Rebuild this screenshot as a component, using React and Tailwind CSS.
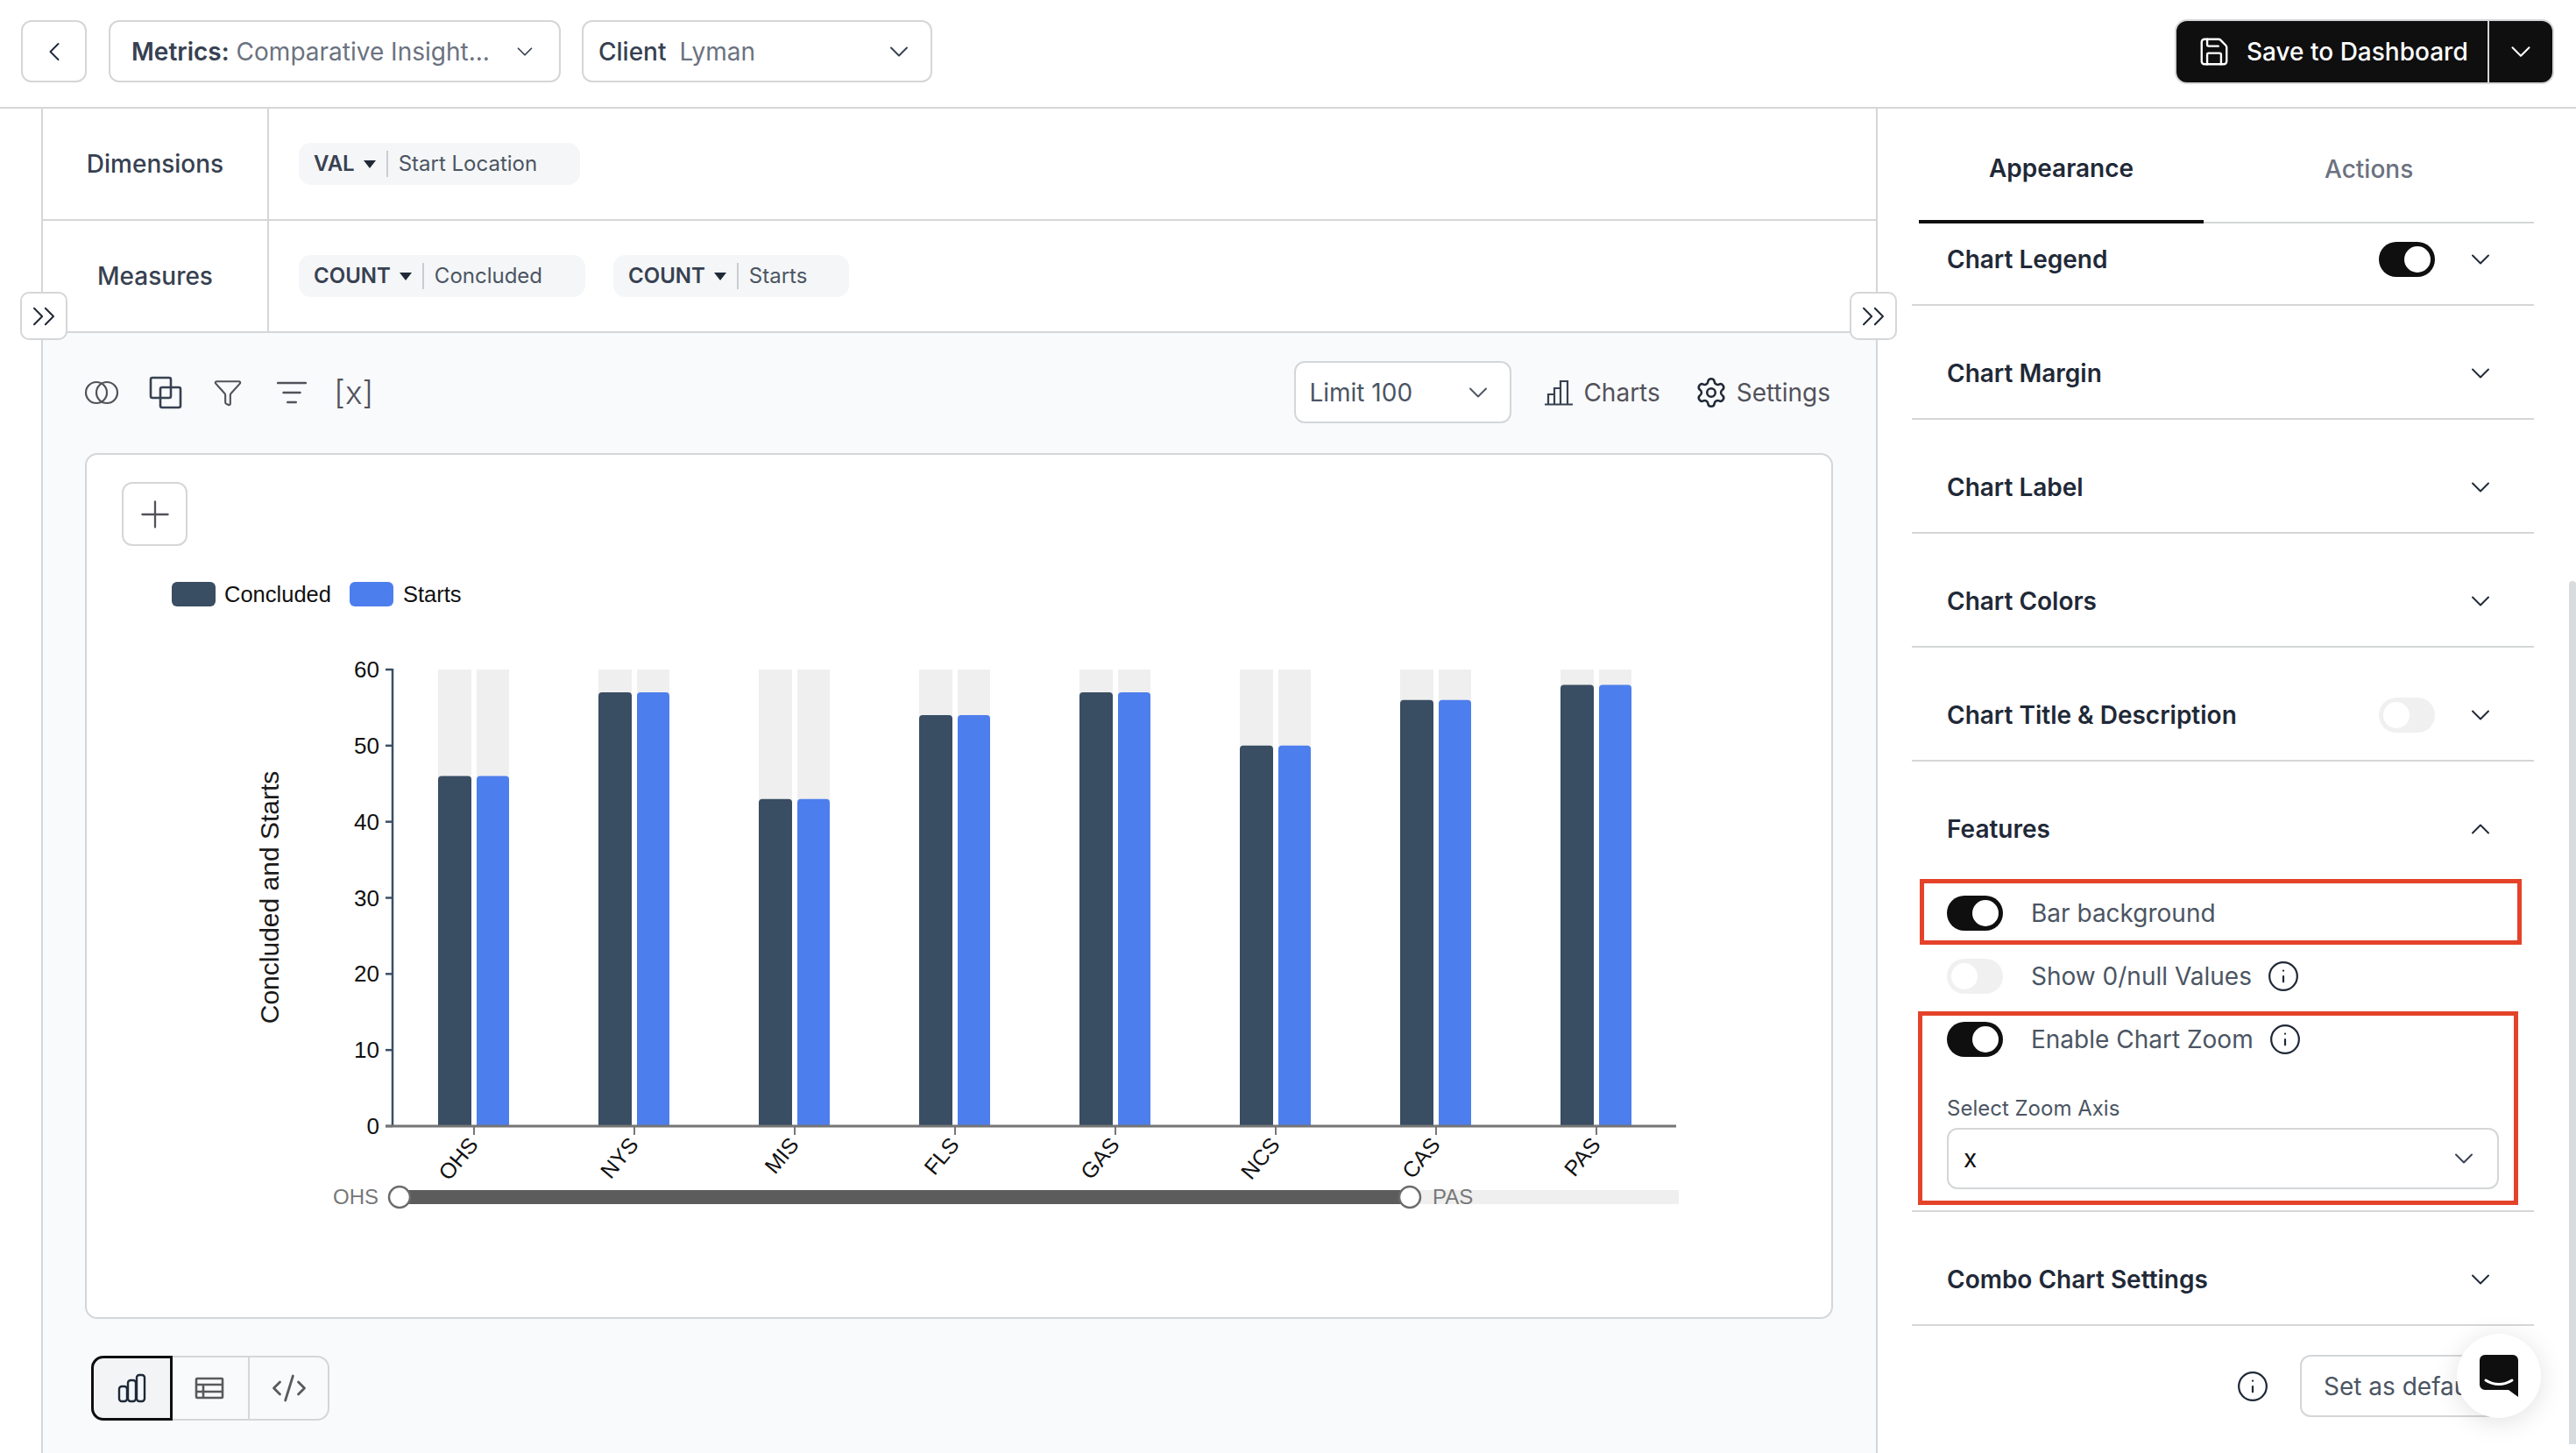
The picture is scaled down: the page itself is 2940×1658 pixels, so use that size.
import { ChevronDown, ChevronUp, ChevronLeft, ChevronsRight, Save, Filter, ListFilter, Settings, Info, Plus, CodeXml } from 'lucide-react'

const BARS = [
  { name: 'OHS', value: 46 },
  { name: 'NYS', value: 57 },
  { name: 'MIS', value: 43 },
  { name: 'FLS', value: 54 },
  { name: 'GAS', value: 57 },
  { name: 'NCS', value: 50 },
  { name: 'CAS', value: 56 },
  { name: 'PAS', value: 58 },
]

const Y0 = 1285
const UNIT = 8.683

// rectangle with rounded top only
const barPath = (x, w, h) => `M${x} ${Y0}V${Y0 - h + 4}Q${x} ${Y0 - h} ${x + 4} ${Y0 - h}H${x + w - 4}Q${x + w} ${Y0 - h} ${x + w} ${Y0 - h + 4}V${Y0}Z`

function Toggle({ on }) {
  return (
    <div className={`flex h-[40px] w-[64px] shrink-0 rounded-full p-[5px] ${on ? 'justify-end bg-[#0f0f10]' : 'justify-start bg-[#f0f0f1]'}`}>
      <div className="h-[30px] w-[30px] rounded-full bg-white" />
    </div>
  )
}

function Chip({ agg, label, className }) {
  return (
    <div className={`flex h-[48px] items-center rounded-[14px] bg-[#f5f6f7] pl-[17px] text-[24px] ${className}`}>
      <span className="font-semibold text-[#374151]">{agg}</span>
      <span className="ml-[10px] h-0 w-0 border-x-[7px] border-t-[9px] border-x-transparent border-t-[#1f2937]" />
      <span className="ml-[12px] h-[30px] w-[2px] bg-[#c9ccd1]" />
      <span className="ml-[12px] text-[#4b5563]">{label}</span>
    </div>
  )
}

function Row({ label, toggle, up, first }) {
  const Icon = up ? ChevronUp : ChevronDown
  return (
    <div className={`flex items-center pl-[40px] pr-[43px] ${first ? 'h-[94px] border-b-2 border-[#d4d6d8] pb-[10px]' : up ? 'h-[126px] pt-[28px]' : 'h-[130px] border-b-2 border-[#d4d6d8] pt-[26px]'}`}>
      <span className="text-[28px] font-semibold text-[#1f2937]">{label}</span>
      <div className="ml-auto flex items-center gap-[34px]">
        {toggle !== undefined && <Toggle on={toggle} />}
        <Icon size={36} strokeWidth={1.3} className="text-[#1f2937]" />
      </div>
    </div>
  )
}

function Feature({ label, on, info }) {
  return (
    <div className="flex h-[72px] items-center pl-[40px]">
      <Toggle on={on} />
      <span className="ml-[32px] text-[28px] text-[#4b5563]">{label}</span>
      {info && <Info size={38} strokeWidth={1.4} className="ml-[17px] text-[#1f2937]" />}
    </div>
  )
}

function Chart() {
  return (
    <svg viewBox="99 700 1991 720" className="mt-[8px] block h-[720px] w-[1991px]" fontFamily="'Liberation Sans', sans-serif">
      {[0, 10, 20, 30, 40, 50, 60].map((v) => (
        <g key={v}>
          <line x1="440" x2="448" y1={Y0 - v * UNIT} y2={Y0 - v * UNIT} stroke="#3b4f66" strokeWidth="2.5" />
          <text x="433" y={Y0 - v * UNIT + 9} textAnchor="end" fontSize="26" fill="#111">{v}</text>
        </g>
      ))}
      <line x1="448" x2="448" y1="763" y2={Y0} stroke="#3b4f66" strokeWidth="2.5" />
      <text transform="translate(318 1024) rotate(-90)" textAnchor="middle" fontSize="30" fill="#1a1a1a">Concluded and Starts</text>
      {BARS.map((b, i) => {
        const t = 541 + i * 183
        const h = b.value * UNIT
        return (
          <g key={b.name}>
            <rect x={t - 41} y="764" width="38" height={Y0 - 764} fill="#efefef" />
            <rect x={t + 3} y="764" width="37" height={Y0 - 764} fill="#efefef" />
            <path d={barPath(t - 41, 38, h)} fill="#394d63" />
            <path d={barPath(t + 3, 37, h)} fill="#4d7eed" />
            <line x1={t} x2={t} y1={Y0} y2={Y0 + 10} stroke="#777" strokeWidth="2" />
            <text transform={`translate(${t + 6} ${Y0 + 22}) rotate(-50)`} textAnchor="end" fontSize="25" fill="#111">{b.name}</text>
          </g>
        )
      })}
      <line x1="440" x2="1913" y1={Y0} y2={Y0} stroke="#757575" strokeWidth="3" />
      <rect x="456" y="1358" width="1460" height="16" fill="#efefef" />
      <rect x="456" y="1358" width="1153" height="16" fill="#5c5c5c" />
      <circle cx="456" cy="1366" r="12" fill="#fff" stroke="#6b6b6b" strokeWidth="2.5" />
      <circle cx="1609" cy="1366" r="12" fill="#fff" stroke="#6b6b6b" strokeWidth="2.5" />
      <text x="432" y="1374" textAnchor="end" fontSize="24" fill="#777">OHS</text>
      <text x="1635" y="1374" fontSize="24" fill="#777">PAS</text>
    </svg>
  )
}

export default function App() {
  return (
    <div className="relative h-[1658px] w-[2940px] overflow-hidden bg-white font-[family-name:Inter,sans-serif]">
      {/* top bar */}
      <header className="flex h-[124px] items-start border-b-2 border-[#d4d6d8] pl-[24px] pr-[25px] pt-[23px]">
        <button className="flex h-[71px] w-[75px] items-center justify-center rounded-[12px] border-2 border-[#d4d6d8]">
          <ChevronLeft size={36} strokeWidth={1.3} className="text-[#1f2937]" />
        </button>
        <div className="ml-[25px] flex h-[71px] w-[516px] items-center rounded-[12px] border-2 border-[#d4d6d8] pl-[24px] text-[28px]">
          <span className="font-semibold text-[#374151]">Metrics:</span>
          <span className="ml-[8px] text-[#6b7280]">Comparative Insight...</span>
          <ChevronDown size={30} strokeWidth={1.4} className="ml-auto mr-[24px] text-[#374151]" />
        </div>
        <div className="ml-[24px] flex h-[71px] w-[400px] items-center rounded-[12px] border-2 border-[#d4d6d8] pl-[17px] text-[28px]">
          <span className="font-medium text-[#374151]">Client</span>
          <span className="ml-[15px] text-[#6b7280]">Lyman</span>
          <ChevronDown size={36} strokeWidth={1.3} className="ml-auto mr-[18px] text-[#374151]" />
        </div>
        <div className="ml-auto -mt-px flex h-[74px] w-[433px] items-center rounded-[14px] border-2 border-[#d4d6d8] bg-[#0f0f10] text-white">
          <Save size={38} strokeWidth={1.5} className="ml-[24px]" />
          <span className="ml-[18px] text-[28px] font-medium">Save to Dashboard</span>
          <span className="ml-auto h-full w-[2px] bg-[#d4d6d8]" />
          <ChevronDown size={38} strokeWidth={1.3} className="mx-[17px]" />
        </div>
      </header>

      <div className="flex h-[1534px]">
        {/* main column */}
        <main className="ml-[47px] w-[2096px] border-x-2 border-[#d4d6d8] bg-[#f9fafb]">
          <div className="flex h-[128px] border-b-2 border-[#d4d6d8] bg-white">
            <div className="flex w-[258px] items-center justify-center border-r-2 border-[#d4d6d8] text-[28px] font-medium text-[#374151]">Dimensions</div>
            <div className="flex items-center pl-[34px]">
              <Chip agg="VAL" label="Start Location" className="w-[321px]" />
            </div>
          </div>
          <div className="flex h-[128px] border-b-2 border-[#d4d6d8] bg-white">
            <div className="flex w-[258px] items-center justify-center border-r-2 border-[#d4d6d8] text-[28px] font-medium text-[#374151]">Measures</div>
            <div className="flex items-center gap-[32px] pl-[34px]">
              <Chip agg="COUNT" label="Concluded" className="w-[327px]" />
              <Chip agg="COUNT" label="Starts" className="w-[269px]" />
            </div>
          </div>

          {/* toolbar */}
          <div className="flex h-[137px] items-center pb-[2px] pl-[47px] text-[#52525b]">
            <svg width="40" height="28" viewBox="0 0 40 28" fill="none" stroke="#52525b" strokeWidth="2.2">
              <circle cx="14" cy="14" r="12" />
              <circle cx="26" cy="14" r="12" />
            </svg>
            <svg width="38" height="38" viewBox="0 0 38 38" fill="none" stroke="#374151" strokeWidth="2.6" className="ml-[34px]">
              <rect x="2" y="2" width="23" height="23" rx="2" />
              <rect x="13" y="13" width="23" height="23" rx="2" />
            </svg>
            <Filter size={34} strokeWidth={1.5} className="ml-[35px]" />
            <ListFilter size={38} strokeWidth={1.6} className="ml-[37px]" />
            <span className="ml-[29px] text-[37px] font-light leading-none">[x]</span>
            <div className="ml-auto flex h-[71px] w-[248px] items-center rounded-[12px] border-2 border-[#d4d6d8] bg-white pl-[15px] text-[28px] text-[#4b5563]">
              Limit 100
              <ChevronDown size={36} strokeWidth={1.3} className="ml-auto mr-[18px]" />
            </div>
            <svg width="32" height="30" viewBox="0 0 32 30" fill="none" stroke="#374151" strokeWidth="2.2" className="ml-[38px]">
              <path d="M0 28.5h32M4 28V17h7v11M11 28V10h7v18M18 28V2h8v26" />
            </svg>
            <span className="ml-[12px] text-[28px]">Charts</span>
            <Settings size={38} strokeWidth={1.6} className="ml-[39px] text-[#1f2937]" />
            <span className="ml-[10px] mr-[52px] text-[28px]">Settings</span>
          </div>

          {/* chart card */}
          <div className="ml-[48px] h-[988px] w-[1995px] rounded-[14px] border-2 border-[#d4d6d8] bg-white">
            <div className="pl-[40px] pt-[31px]">
              <button className="flex h-[73px] w-[75px] items-center justify-center rounded-[12px] border-2 border-[#d4d6d8]">
                <Plus size={50} strokeWidth={1.1} className="text-[#52525b]" />
              </button>
            </div>
            <div className="ml-[97px] mt-[41px] flex h-[28px] items-center text-[25.5px] text-[#111] font-[family-name:'Liberation_Sans',sans-serif]">
              <span className="h-[28px] w-[50px] rounded-[6px] bg-[#394d63]" />
              <span className="ml-[10px]">Concluded</span>
              <span className="ml-[21px] h-[28px] w-[50px] rounded-[6px] bg-[#4d7eed]" />
              <span className="ml-[11px]">Starts</span>
            </div>
            <Chart />
          </div>

          {/* view switch */}
          <div className="ml-[55px] mt-[42px] flex h-[74px] w-[272px] rounded-[14px] border-2 border-[#d4d6d8]">
            <div className="-m-[2px] flex h-[74px] w-[93px] items-center justify-center rounded-l-[14px] border-[3px] border-[#0f0f10] bg-[#f3f4f6]">
              <svg width="34" height="34" viewBox="0 0 34 34" fill="#f3f6fa" stroke="#1f2937" strokeWidth="2.4">
                <rect x="2" y="15" width="9" height="17" rx="3" />
                <rect x="12" y="8" width="9" height="24" rx="3" />
                <rect x="22" y="2" width="9" height="30" rx="3" />
              </svg>
            </div>
            <div className="flex w-[90px] items-center justify-center border-r-2 border-[#d4d6d8]">
              <svg width="34" height="26" viewBox="0 0 34 26" fill="none" stroke="#5a5a5a" strokeWidth="2.6">
                <rect x="2" y="2" width="30" height="22" rx="1" />
                <path d="M2 9h30M2 17h30M10 9v15" />
              </svg>
            </div>
            <div className="flex flex-1 items-center justify-center">
              <CodeXml size={42} strokeWidth={1.6} className="text-[#5a5a5a]" />
            </div>
          </div>
        </main>

        {/* right panel */}
        <aside className="flex-1">
          <div className="ml-[47px] flex h-[131px] w-[702px] border-b-2 border-[#d4d6d8] text-[28px] font-medium">
            <div className="-mb-[2px] flex h-[131px] w-[325px] items-center justify-center border-b-4 border-[#0f0f10] pt-[8px] font-semibold text-[#1f2937]">Appearance</div>
            <div className="flex h-[129px] flex-1 items-center pt-[8px] pl-[138px] text-[#6b7280]">Actions</div>
          </div>
          <div className="ml-[39px] w-[710px]">
            <Row label="Chart Legend" toggle={true} first />
            <Row label="Chart Margin" />
            <Row label="Chart Label" />
            <Row label="Chart Colors" />
            <Row label="Chart Title & Description" toggle={false} />
            <div className="border-b-2 border-[#d4d6d8]">
              <Row label="Features" up />
              <div className="mt-[11px]">
                <Feature label="Bar background" on />
                <Feature label="Show 0/null Values" info />
                <Feature label="Enable Chart Zoom" on info />
              </div>
              <div className="mt-[28px] pl-[40px] text-[24px] leading-[29px] text-[#4b5563]">Select Zoom Axis</div>
              <div className="ml-[40px] mt-[8px] flex h-[70px] w-[630px] items-center rounded-[12px] border-2 border-[#d4d6d8] pl-[17px] pr-[20px] text-[28px] text-[#111]">
                x
                <ChevronDown size={36} strokeWidth={1.3} className="ml-auto text-[#374151]" />
              </div>
              <div className="h-[24px]" />
            </div>
            <Row label="Combo Chart Settings" />
          </div>
          <div className="mt-[33px] flex items-center justify-end pr-[70px]">
            <Info size={38} strokeWidth={1.4} className="text-[#1f2937]" />
            <div className="ml-[35px] flex h-[71px] w-[245px] items-center rounded-[12px] border-2 border-[#d4d6d8] pl-[25px] text-[28px] text-[#4b5563]">Set as default</div>
          </div>
        </aside>
      </div>

      {/* overlays */}
      <button className="absolute left-[23px] top-[333px] flex h-[55px] w-[54px] items-center justify-center rounded-[10px] border-2 border-[#d4d6d8] bg-white">
        <ChevronsRight size={44} strokeWidth={1.1} className="shrink-0 text-[#1f2937]" />
      </button>
      <button className="absolute left-[2111px] top-[333px] flex h-[55px] w-[54px] items-center justify-center rounded-[10px] border-2 border-[#d4d6d8] bg-white">
        <ChevronsRight size={44} strokeWidth={1.1} className="shrink-0 text-[#1f2937]" />
      </button>

      <div className="absolute left-[2191px] top-[1003px] h-[75px] w-[687px] border-[5px] border-[#e4432a]" />
      <div className="absolute left-[2189px] top-[1154px] h-[221px] w-[685px] border-[5px] border-[#e4432a]" />

      <div className="absolute left-[2932px] top-[663px] h-[985px] w-[8px] rounded-t-full bg-[#d9dcdf]" />

      <div className="absolute left-[2804px] top-[1522px] flex h-[96px] w-[96px] items-center justify-center rounded-full bg-white shadow-[0_4px_30px_rgba(0,0,0,0.12)]">
        <svg width="44" height="48" viewBox="0 0 44 48">
          <path d="M6 0h32a6 6 0 0 1 6 6v42l-11-8H6a6 6 0 0 1-6-6V6a6 6 0 0 1 6-6z" fill="#0f0f10" />
          <path d="M7 29c9 6 21 6 30 0" fill="none" stroke="#fff" strokeWidth="3" strokeLinecap="round" />
        </svg>
      </div>
    </div>
  )
}
